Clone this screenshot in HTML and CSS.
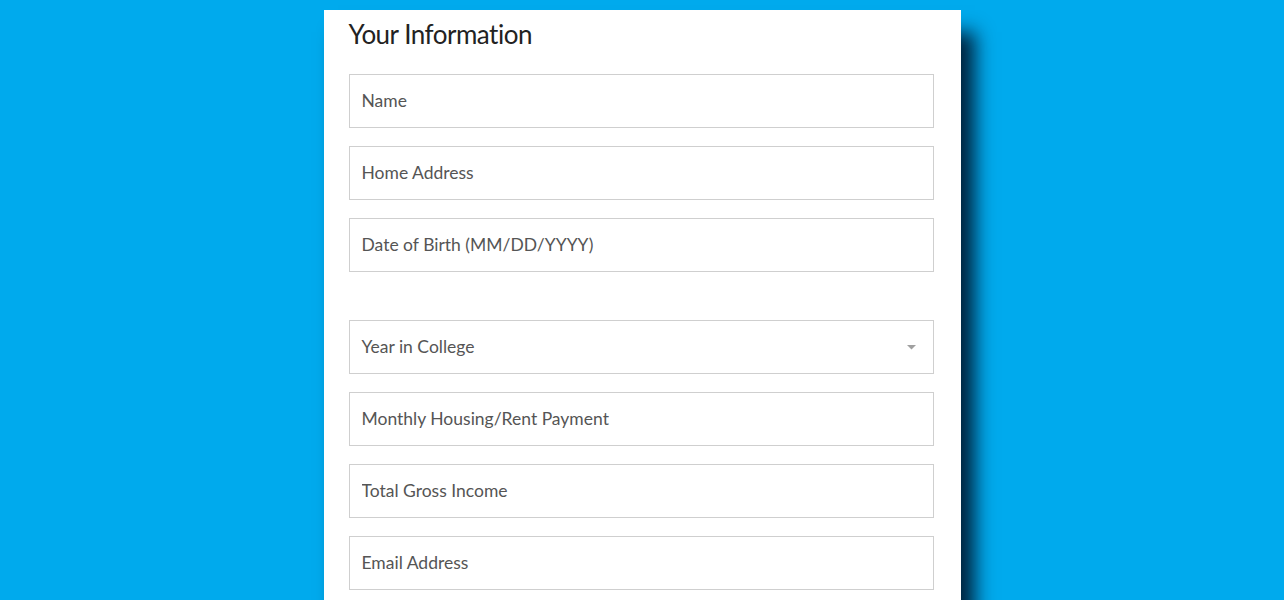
FILE: index.html
```html
<!DOCTYPE html>
<html lang="en">
    <head>
        <meta charset="UTF-8" />
        <meta name="viewport" content="width=device-width, initial-scale=1.0" />
        <title>Your Information</title>
        <link rel="stylesheet" href="styles.css">
    </head>
    <body>
        <div class="card">
            <h2 class="title">Your Information</h2>
            <form class="form">
                <div class="group">
                    <input class="field" type="text" placeholder="Name" />
                    <input class="field" type="text" placeholder="Home Address" />
                    <input class="field" type="text" placeholder="Date of Birth (MM/DD/YYYY)" />
                </div>
                <div class="group">
                    <div class="select">
                        <span class="select-label">Year in College</span>
                        <svg class="caret" width="9" height="5" viewBox="0 0 9 5">
                            <polygon points="0 0 9 0 4.5 4.5" fill="#a0a0a0"></polygon>
                        </svg>
                    </div>
                    <input class="field" type="text" placeholder="Monthly Housing/Rent Payment" />
                    <input class="field" type="text" placeholder="Total Gross Income" />
                    <input class="field" type="text" placeholder="Email Address" />
                </div>
            </form>
        </div>
    </body>
</html>
```

FILE: styles.css
```css
*,
*::before,
*::after {
    box-sizing: border-box;
}

html,
body {
    height: 100%;
}

body {
    margin: 0;
    background: #00aaed;
    font-family: Lato, "Open Sans", sans-serif;
    overflow: hidden;
}

.card {
    width: 637px;
    min-height: calc(100vh - 10px);
    margin: 10px auto 0;
    padding: 0 27px 0 25px;
    background: #fff;
    box-shadow: 14px 22px 18px rgba(0, 10, 30, 0.85);
}

.title {
    margin: 0;
    padding-top: 8px;
    height: 64px;
    font-size: 26px;
    font-weight: 400;
    letter-spacing: -0.5px;
    color: #222;
}

.form {
    display: flex;
    flex-direction: column;
    gap: 48px;
}

.group {
    display: flex;
    flex-direction: column;
    gap: 18px;
}

.field,
.select {
    display: flex;
    align-items: center;
    width: 585px;
    height: 54px;
    padding: 0 12px 2px;
    border: 1px solid #cfcfcf;
    border-radius: 0;
    background: #fff;
    font-family: inherit;
    font-size: 17.5px;
    color: #555;
    outline: none;
}

.field::placeholder {
    color: #555;
    opacity: 1;
}

.select {
    justify-content: space-between;
    padding-right: 17px;
}

.caret {
    display: block;
    margin-top: 3px;
}
```
